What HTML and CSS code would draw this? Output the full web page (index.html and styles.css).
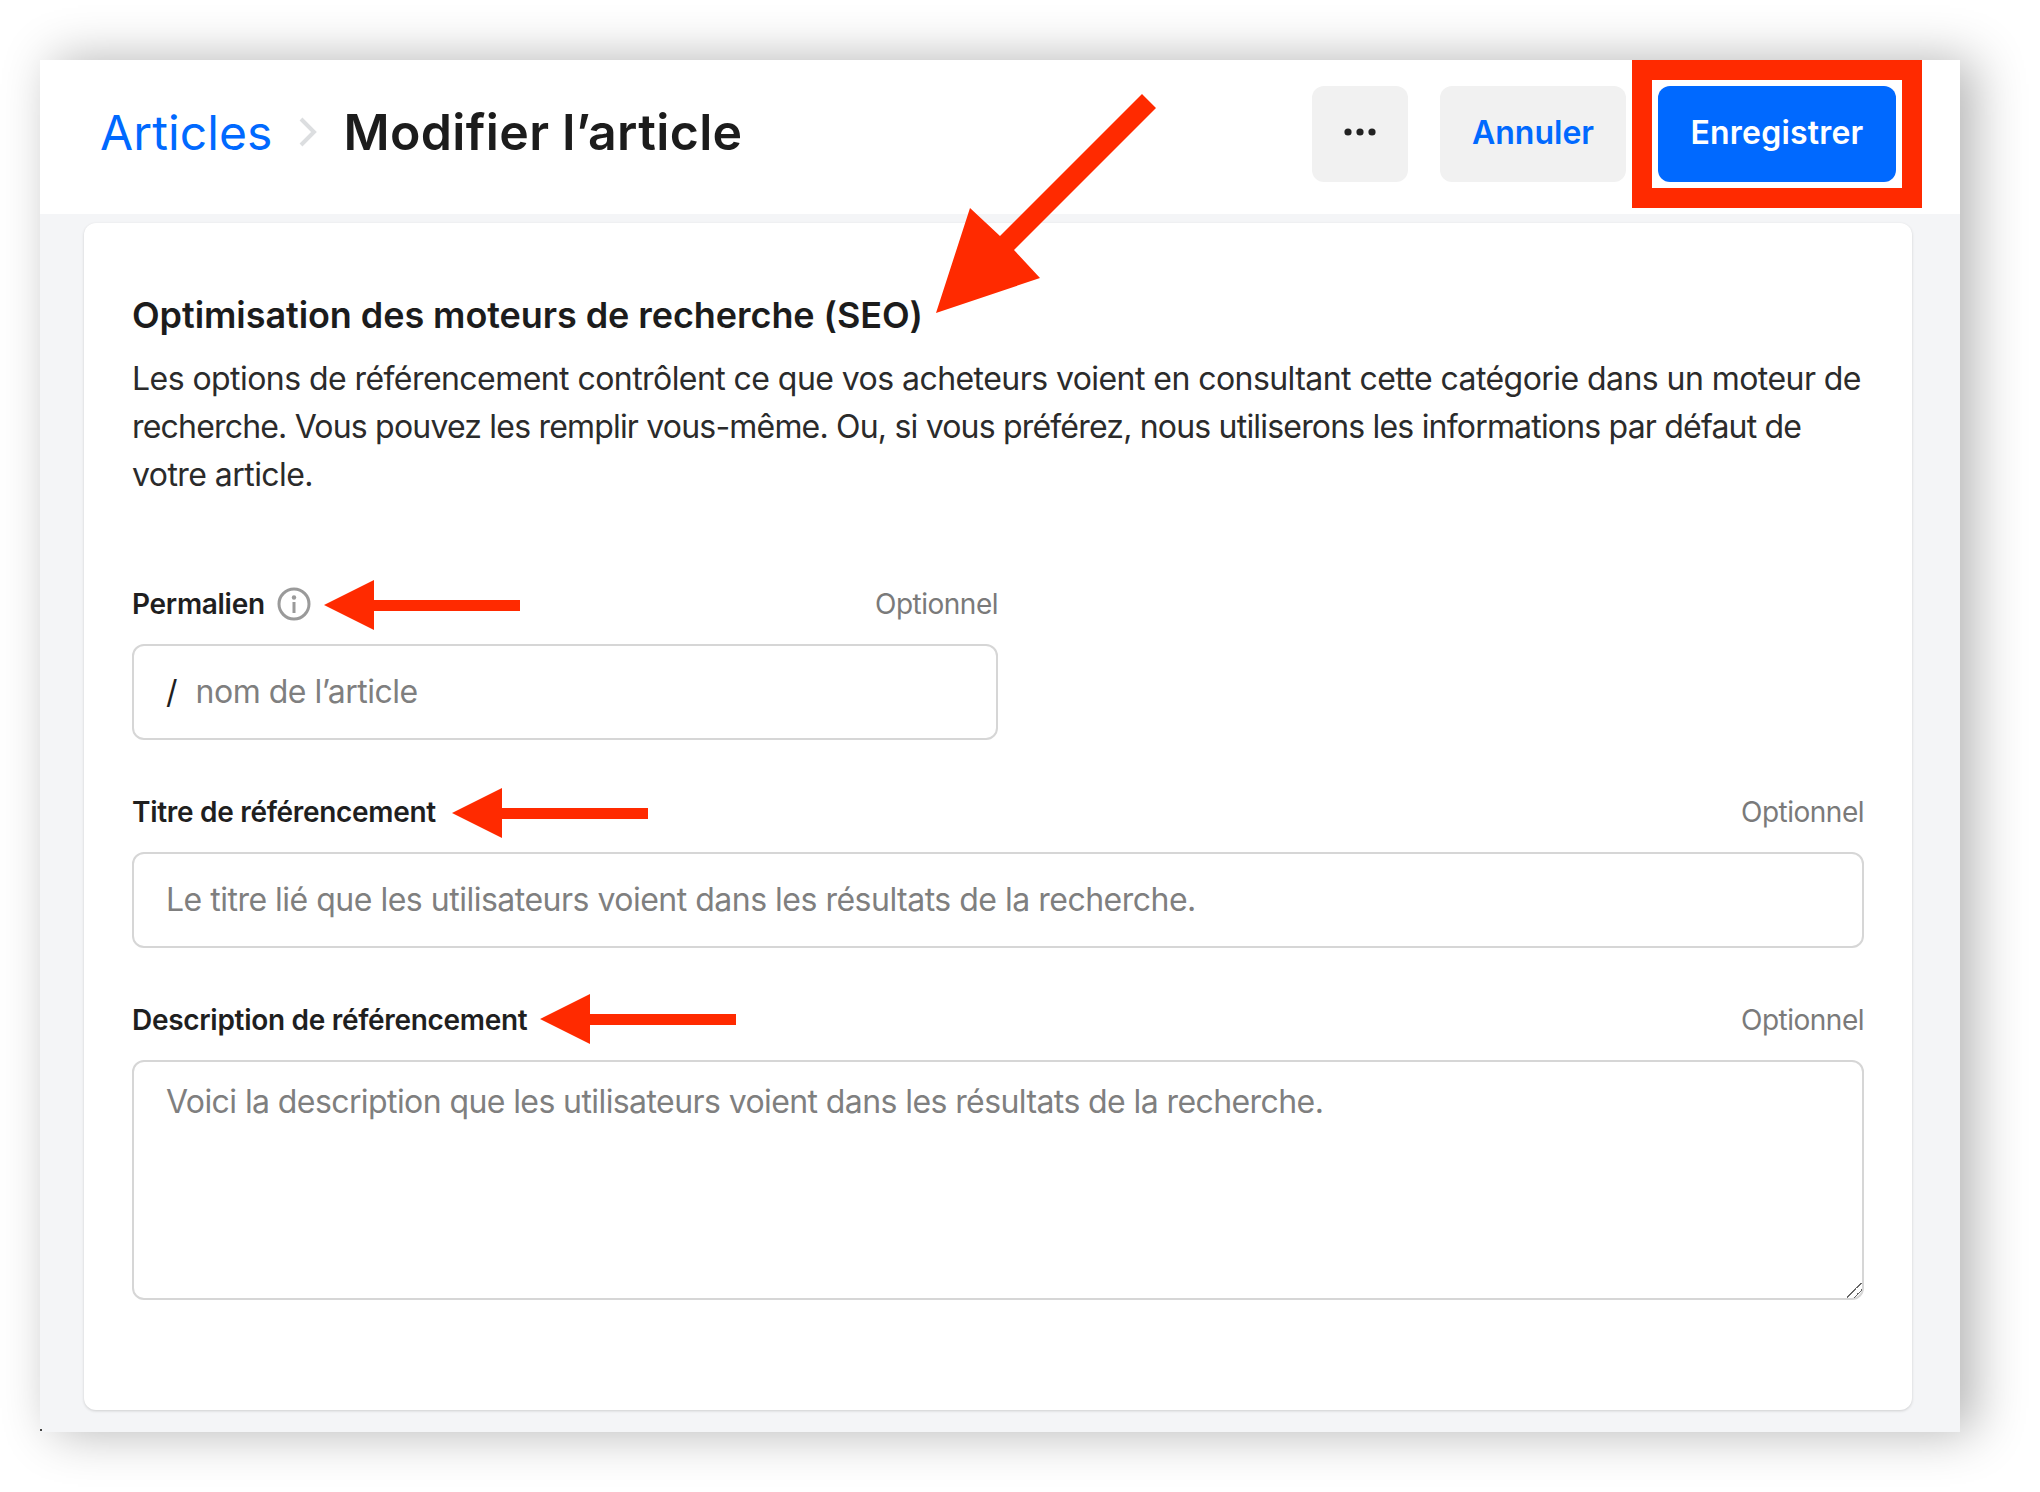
FILE: index.html
```html
<!DOCTYPE html>
<html lang="fr">
<head>
<meta charset="utf-8">
<title>Modifier l’article</title>
<link rel="stylesheet" href="styles.css">
</head>
<body>
<main class="window">
  <header class="topbar">
    <nav class="crumbs">
      <a class="crumb-link">Articles</a>
      <svg class="crumb-sep" width="20" height="32" viewBox="0 0 20 32"><path d="M3 3 L16 16 L3 29" fill="none" stroke="#dcdee0" stroke-width="4"/></svg>
      <h1 class="crumb-title">Modifier l’article</h1>
    </nav>
    <div class="actions">
      <button class="btn btn-icon"><svg width="32" height="8" viewBox="0 0 32 8"><circle cx="4" cy="4" r="3.6" fill="#222"/><circle cx="16" cy="4" r="3.6" fill="#222"/><circle cx="28" cy="4" r="3.6" fill="#222"/></svg></button>
      <button class="btn btn-ghost">Annuler</button>
      <button class="btn btn-primary">Enregistrer</button>
    </div>
  </header>
  <section class="content">
    <div class="card">
      <h2 class="card-title">Optimisation des moteurs de recherche (SEO)</h2>
      <p class="card-text">
        <span class="line">Les options de référencement contrôlent ce que vos acheteurs voient en consultant cette catégorie dans un moteur de</span>
        <span class="line line-tight">recherche. Vous pouvez les remplir vous-même. Ou, si vous préférez, nous utiliserons les informations par défaut de</span>
        <span class="line">votre article.</span>
      </p>
      <div class="field field-half field-first">
        <div class="field-head">
          <label class="field-label">Permalien
            <svg class="info" width="34" height="34" viewBox="0 0 34 34"><circle cx="17" cy="17" r="15" fill="none" stroke="#9a9a9a" stroke-width="3"/><circle cx="17" cy="10.5" r="2.2" fill="#9a9a9a"/><rect x="15.5" y="15" width="3" height="11" fill="#9a9a9a"/></svg>
          </label>
          <span class="field-opt">Optionnel</span>
        </div>
        <div class="input input-slug"><span class="slash">/</span><input class="control" placeholder="nom de l’article"></div>
      </div>
      <div class="field">
        <div class="field-head"><label class="field-label">Titre de référencement</label><span class="field-opt">Optionnel</span></div>
        <div class="input"><input class="control" placeholder="Le titre lié que les utilisateurs voient dans les résultats de la recherche."></div>
      </div>
      <div class="field">
        <div class="field-head"><label class="field-label">Description de référencement</label><span class="field-opt">Optionnel</span></div>
        <textarea class="area" placeholder="Voici la description que les utilisateurs voient dans les résultats de la recherche."></textarea>
      </div>
    </div>
  </section>
  <span class="speck"></span>
  <div class="highlight"></div>
</main>
<svg class="arrows" width="2040" height="1492" viewBox="0 0 2040 1492">
  <g fill="#ff2a00">
    <polygon points="1142,94 1156,108 1014,250 1040,278 936,313 970,208 1000,236"/>
    <polygon points="324,605 374,580 374,600 520,600 520,611 374,611 374,630"/>
    <polygon points="452,813 502,788 502,808 648,808 648,819 502,819 502,838"/>
    <polygon points="540,1019 590,994 590,1014 736,1014 736,1025 590,1025 590,1044"/>
  </g>
</svg>
</body>
</html>
```
FILE: styles.css
```css
* { box-sizing: border-box; }
html, body { margin: 0; padding: 0; background: #fff; }
body { width: 2040px; height: 1492px; overflow: hidden; font-family: Inter, "Liberation Sans", sans-serif; color: #1f1f1f; }
.window { position: relative; width: 1920px; height: 1372px; margin: 60px 0 0 40px; background: #f4f5f7; box-shadow: 14px 0 48px rgba(0,0,0,.3); display: flex; flex-direction: column; }
.topbar { height: 154px; flex: none; background: #fff; display: flex; align-items: flex-start; justify-content: space-between; padding: 26px 64px 0 61px; }
.crumbs { display: flex; align-items: center; height: 92px; margin-left: -1px; }
.crumb-link { font-size: 48px; font-weight: 400; color: #0069ff; letter-spacing: .1px; }
.crumb-sep { margin: 0 25px 0 26px; }
.crumb-title { margin: 0; font-size: 50px; font-weight: 600; color: #1c1c1c; letter-spacing: .36px; }
.actions { display: flex; gap: 32px; }
.btn { height: 96px; border: 0; border-radius: 12px; padding: 0 0 3px; font-family: inherit; font-size: 32px; font-weight: 600; display: flex; align-items: center; justify-content: center; }
.btn-icon { width: 96px; background: #f1f1f1; padding: 0 0 4px; }
.btn-ghost { width: 186px; background: #f1f1f1; color: #0069ff; }
.btn-primary { width: 238px; background: #0069ff; color: #fff; letter-spacing: .2px; }
.content { flex: 1; padding: 9px 48px 22px 44px; }
.card { height: 1187px; background: #fff; border-radius: 12px; box-shadow: 0 1px 3px rgba(0,0,0,.16); padding: 66px 48px 0 48px; }
.card-title { margin: 0; font-size: 36px; line-height: 52px; font-weight: 600; letter-spacing: -.07px; color: #1c1c1c; }
.card-text { margin: 14px 0 0; font-size: 32px; line-height: 48px; font-weight: 400; letter-spacing: -.56px; color: #2b2b2b; }
.line { display: block; white-space: nowrap; }
.line-tight { letter-spacing: -.81px; }
.field { margin-top: 52px; }
.field-first { margin-top: 85px; }
.field-half { width: 866px; }
.field-head { display: flex; justify-content: space-between; align-items: center; height: 40px; margin-bottom: 20px; }
.field-label { display: flex; align-items: center; gap: 12px; font-size: 28px; font-weight: 600; letter-spacing: -.3px; color: #1f1f1f; }
.field-opt { font-size: 28px; letter-spacing: -.5px; color: #7a7a7a; }
.input { display: flex; align-items: center; height: 96px; padding: 0 32px 2px; background: #fff; border: 2px solid #d6d6d6; border-radius: 12px; }
.slash { font-size: 32px; color: #1f1f1f; margin-right: 18px; }
.control { flex: 1; min-width: 0; border: 0; padding: 0; outline: 0; background: none; font-family: inherit; font-size: 32px; letter-spacing: -.5px; color: #1f1f1f; }
.control::placeholder, .area::placeholder { color: #7f7f7f; opacity: 1; }
.area { display: block; width: 100%; height: 240px; padding: 20px 32px; background: #fff; border: 2px solid #d6d6d6; border-radius: 12px; outline: 0; font-family: inherit; font-size: 32px; line-height: 40px; letter-spacing: -.59px; color: #1f1f1f; }
.area::-webkit-resizer { background: linear-gradient(135deg, transparent 44%, #666 44%, #666 50%, transparent 50%, transparent 70%, #666 70%, #666 76%, transparent 76%); }
.speck { position: absolute; left: 0; bottom: 1px; width: 2px; height: 2px; background: #444; }
.highlight { position: absolute; left: 1592px; top: 0; width: 290px; height: 148px; border: 20px solid #ff2a00; }
.arrows { position: absolute; left: 0; top: 0; pointer-events: none; }
```
